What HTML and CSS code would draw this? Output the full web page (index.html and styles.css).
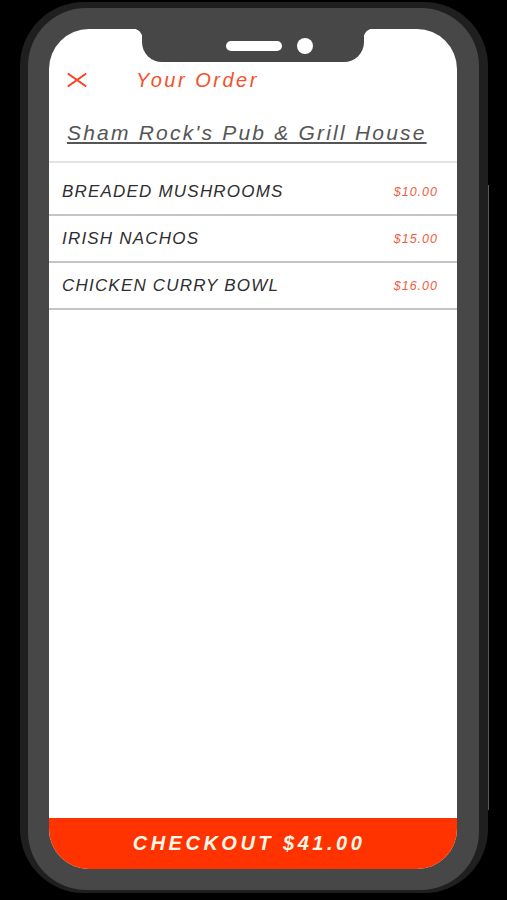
FILE: index.html
```html
<!DOCTYPE html>
<html lang="en">
<head>
  <meta charset="UTF-8" />
  <meta name="viewport" content="width=device-width, initial-scale=1.0"/>
  <title>Your Order</title>
  <link rel="stylesheet" href="styles.css">
</head>
<body>
<div class="phone">
  <div class="bezel">
    <div class="screen">
      <div class="notch-row">
        <div class="notch">
          <span class="speaker"></span>
          <span class="camera"></span>
        </div>
      </div>

      <div class="header">
        <svg class="close" width="20" height="14" viewBox="0 0 20 14">
          <path d="M1.5 1 L18.5 13 M18.5 1 L1.5 13" stroke="#f2431f" stroke-width="2" stroke-linecap="round" fill="none"/>
        </svg>
        <h1>Your Order</h1>
      </div>

      <div class="restaurant">
        <a href="#">Sham Rock's Pub &amp; Grill House</a>
      </div>

      <ul class="items">
        <li><span class="name">BREADED MUSHROOMS</span><span class="price">$10.00</span></li>
        <li><span class="name">IRISH NACHOS</span><span class="price">$15.00</span></li>
        <li><span class="name">CHICKEN CURRY BOWL</span><span class="price">$16.00</span></li>
      </ul>

      <button class="checkout">CHECKOUT $41.00</button>
    </div>
  </div>
</div>
</body>
</html>
```

FILE: styles.css
```css
body {
  font-family: 'Liberation Sans', Arial, sans-serif;
  margin: 0;
  padding: 0;
  background-color: #000;
  height: 900px;
  overflow: hidden;
}

.phone {
  position: relative;
  box-sizing: border-box;
  width: 468px;
  height: 891px;
  margin: 2px 0 0 20px;
  padding: 6px 9px 3px 8px;
  background: #1f1f1f;
  border-radius: 64px;
}

/* side button line */
.phone::after {
  content: "";
  position: absolute;
  right: -1px;
  top: 183px;
  width: 1px;
  height: 625px;
  background: #5a5a5a;
}

.bezel {
  box-sizing: border-box;
  height: 100%;
  padding: 21px 22px 21px 21px;
  background: #474747;
  border-radius: 58px;
}

.screen {
  height: 840px;
  background: #fff;
  border-radius: 40px;
  overflow: hidden;
  display: flex;
  flex-direction: column;
}

.notch-row {
  display: flex;
  justify-content: center;
  height: 33px;
  flex-shrink: 0;
}

.notch {
  position: relative;
  width: 222px;
  height: 33px;
  background: #474747;
  border-radius: 0 0 20px 20px;
  display: flex;
  align-items: center;
  justify-content: center;
  gap: 15px;
  padding-left: 32px;
  box-sizing: border-box;
}

.notch::before,
.notch::after {
  content: "";
  position: absolute;
  top: 0;
  width: 9px;
  height: 9px;
}

.notch::before {
  left: -9px;
  background: radial-gradient(circle at 0 100%, transparent 9px, #474747 9.5px);
}

.notch::after {
  right: -9px;
  background: radial-gradient(circle at 100% 100%, transparent 9px, #474747 9.5px);
}

.speaker {
  width: 56px;
  height: 10px;
  background: #fff;
  border-radius: 5px;
}

.camera {
  width: 16px;
  height: 16px;
  background: #fff;
  border-radius: 50%;
}

.header {
  display: flex;
  align-items: center;
  padding: 6px 0 0 18px;
  height: 24px;
}

.close {
  flex-shrink: 0;
}

.header h1 {
  margin: 0 0 0 49px;
  font-size: 20px;
  font-weight: normal;
  font-style: italic;
  letter-spacing: 2.5px;
  color: #f4502b;
}

.restaurant {
  margin-top: 29px;
  padding: 0 0 14px 18px;
  border-bottom: 2px solid #e4e4e4;
  line-height: 24px;
}

.restaurant a {
  font-size: 21px;
  font-style: italic;
  letter-spacing: 2.2px;
  color: #555;
  text-decoration: underline;
}

.items {
  list-style: none;
  margin: 0;
  padding: 6px 0 0;
}

.items li {
  display: flex;
  align-items: center;
  justify-content: space-between;
  height: 45px;
  padding: 0 19px 0 13px;
  border-bottom: 2px solid #c4c4c4;
}

.name {
  font-size: 17px;
  font-style: italic;
  letter-spacing: 1.2px;
  color: #2e2e2e;
}

.price {
  font-size: 12.5px;
  font-style: italic;
  letter-spacing: 1px;
  color: #f05c3e;
}

.checkout {
  margin-top: auto;
  height: 51px;
  flex-shrink: 0;
  border: none;
  background: #ff3300;
  color: #fff7e8;
  font-family: 'Liberation Sans', Arial, sans-serif;
  font-size: 20px;
  font-weight: bold;
  font-style: italic;
  letter-spacing: 3.5px;
  padding: 0 8px 0 0;
  cursor: pointer;
}
```
